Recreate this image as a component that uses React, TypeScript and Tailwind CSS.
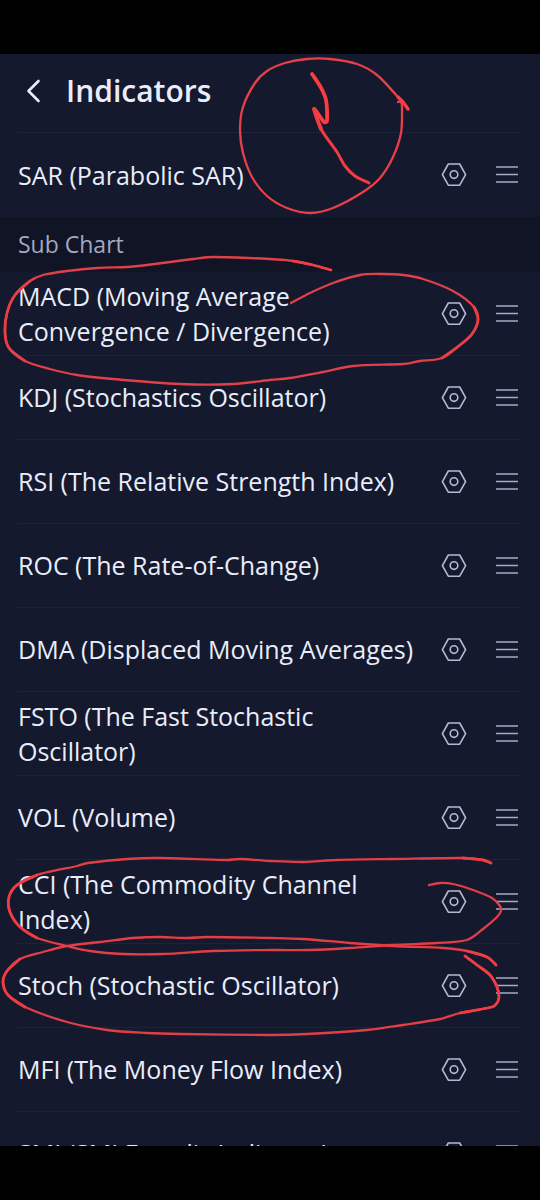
import { useState } from "react";

type Point = [number, number];

type Stroke = {
  width: number;
  color: string;
  points: Point[];
};

const mainIndicators = ["SAR (Parabolic SAR)"];

const subIndicators = [
  "MACD (Moving Average Convergence / Divergence)",
  "KDJ (Stochastics Oscillator)",
  "RSI (The Relative Strength Index)",
  "ROC (The Rate-of-Change)",
  "DMA (Displaced Moving Averages)",
  "FSTO (The Fast Stochastic Oscillator)",
  "VOL (Volume)",
  "CCI (The Commodity Channel Index)",
  "Stoch (Stochastic Oscillator)",
  "MFI (The Money Flow Index)",
  "SMI (SMI Ergodic Indicator)",
];

// Freehand pen marks, in drawing order
const strokes: Stroke[] = [
  {
    width: 2.3,
    color: "#e8404a",
    points: [
      [408, 109], [397, 96], [377, 75], [357, 64], [330, 59], [307, 59], [285, 63], [267, 71], [255, 83],
      [243, 107], [240, 130], [243, 153], [252, 177], [267, 196], [287, 208], [310, 213], [333, 208],
      [363, 192], [380, 178], [393, 157], [401, 133], [402, 107], [401, 102], [398, 102],
    ],
  },
  { width: 3.4, color: "#fb3c41", points: [[408, 109], [403, 102], [398, 97]] },
  {
    width: 3.8,
    color: "#fb3c41",
    points: [[312, 74], [320, 86], [326, 100], [327, 121], [324, 122], [314, 109], [321, 129]],
  },
  {
    width: 3,
    color: "#f03c42",
    points: [[314, 109], [321, 129], [337, 152], [345, 166], [355, 176], [369, 183]],
  },
  {
    width: 2.3,
    color: "#e0404a",
    points: [
      [331, 270], [313, 265], [293, 261], [270, 259], [213, 257], [193, 259], [147, 265], [127, 267], [97, 268],
      [67, 271], [43, 275], [30, 281], [15, 295], [7, 313], [5, 333], [9, 348], [25, 361], [50, 369], [77, 375],
      [113, 379], [180, 384], [233, 384], [270, 380], [290, 378], [323, 372], [353, 366], [403, 364], [420, 361],
      [442, 358], [460, 345], [472, 334], [478, 320], [474, 307], [453, 291], [423, 279], [403, 275], [383, 274],
      [360, 275], [333, 283], [310, 293], [291, 303],
    ],
  },
  { width: 2.8, color: "#f03c42", points: [[331, 270], [313, 265], [293, 261]] },
  { width: 2.8, color: "#e83e45", points: [[30, 281], [15, 295], [7, 313], [5, 333], [9, 348], [25, 361]] },
  { width: 2.8, color: "#e83e45", points: [[442, 358], [460, 345], [472, 334], [478, 320], [474, 307]] },
  {
    width: 2.3,
    color: "#e23e47",
    points: [
      [491, 863], [483, 860], [463, 858], [393, 859], [337, 860], [303, 862], [270, 861], [240, 859], [227, 860],
      [160, 858], [127, 859], [88, 863], [77, 866], [37, 875], [17, 885], [9, 897], [10, 912], [20, 927],
      [37, 938], [67, 946], [90, 951], [123, 954], [163, 954], [213, 951], [270, 950], [310, 950], [350, 948],
      [393, 945], [437, 943], [467, 940], [483, 929], [497, 917], [501, 911], [500, 906], [492, 898], [473, 890],
      [453, 884], [440, 883], [429, 885],
    ],
  },
  { width: 2.8, color: "#f03c42", points: [[491, 863], [483, 860], [463, 858]] },
  { width: 2.8, color: "#f03c42", points: [[37, 875], [17, 885], [9, 897], [10, 912], [20, 927], [37, 938]] },
  {
    width: 2.3,
    color: "#e23e47",
    points: [
      [496, 965], [487, 957], [467, 951], [443, 948], [393, 946], [350, 943], [303, 939], [270, 938], [207, 937],
      [187, 938], [160, 937], [133, 938], [100, 942], [67, 946], [43, 952], [20, 959], [7, 971], [3, 982],
      [8, 995], [25, 1007], [67, 1022], [107, 1030], [147, 1033], [180, 1034], [270, 1035], [307, 1034],
      [367, 1030], [403, 1025], [440, 1019], [460, 1013], [492, 1007], [497, 1003], [499, 997], [497, 987],
      [490, 975], [477, 965], [465, 956],
    ],
  },
  { width: 2.8, color: "#f03c42", points: [[496, 965], [487, 957], [467, 951]] },
  { width: 2.8, color: "#f03c42", points: [[20, 959], [7, 971], [3, 982], [8, 995], [25, 1007]] },
  {
    width: 2.8,
    color: "#f03c42",
    points: [[460, 1013], [492, 1007], [497, 1003], [499, 997], [497, 987], [490, 975], [477, 965], [465, 956]],
  },
];

// Catmull-Rom through the points, written as cubic beziers
function toPath(points: Point[]) {
  let d = `M${points[0][0]} ${points[0][1]}`;
  for (let i = 0; i < points.length - 1; i++) {
    const p0 = points[Math.max(i - 1, 0)];
    const p1 = points[i];
    const p2 = points[i + 1];
    const p3 = points[Math.min(i + 2, points.length - 1)];
    // limit the handles where a long segment meets a short one
    const len = Math.hypot(p2[0] - p1[0], p2[1] - p1[1]);
    const handle = (a: Point, b: Point) => {
      const dist = Math.hypot(b[0] - a[0], b[1] - a[1]) || 1;
      return Math.min(1 / 6, len / 3 / dist);
    };
    const k1 = handle(p0, p2);
    const k2 = handle(p1, p3);
    d += `C${p1[0] + (p2[0] - p0[0]) * k1} ${p1[1] + (p2[1] - p0[1]) * k1}`;
    d += ` ${p2[0] - (p3[0] - p1[0]) * k2} ${p2[1] - (p3[1] - p1[1]) * k2}`;
    d += ` ${p2[0]} ${p2[1]}`;
  }
  return d;
}

function HexIcon() {
  return (
    <svg width="26" height="26" viewBox="0 0 26 26" fill="none" stroke="#b4bad2" strokeWidth="1.6" strokeLinejoin="round">
      <path d="M7.3 2h11.4L24.6 12.6l-5.9 10.6H7.3L1.4 12.6z" />
      <circle cx="13" cy="12.6" r="3.8" />
    </svg>
  );
}

function DragIcon() {
  return (
    <svg width="22" height="18" viewBox="0 0 22 18" fill="none" stroke="#a5abc3" strokeWidth="1.4">
      <path d="M0 1h22M0 8.5h22M0 16h22" />
    </svg>
  );
}

function IndicatorRow({ name, last }: { name: string; last?: boolean }) {
  return (
    <li
      className={
        last
          ? "flex h-[84px] shrink-0 items-center"
          : "flex h-[84px] shrink-0 items-center border-b border-[#1c2338]"
      }
    >
      <span className="flex-1 text-[25px] leading-[35px] text-[#e9edfb]">{name}</span>
      <button type="button" aria-label={`${name} settings`} className="ml-4 shrink-0">
        <HexIcon />
      </button>
      <button type="button" aria-label={`Reorder ${name}`} className="mr-1 ml-[29px] shrink-0 cursor-grab">
        <DragIcon />
      </button>
    </li>
  );
}

export default function App() {
  const [showMarks, setShowMarks] = useState(true);

  return (
    <div className="relative flex h-screen flex-col overflow-hidden bg-black py-[54px] font-['Open_Sans',sans-serif]">
      <main className="flex min-h-0 flex-1 flex-col overflow-hidden bg-[#14192d]">
        <header className="mx-[18px] flex h-[79px] shrink-0 items-center border-b border-[#1c2338] pb-1">
          <button type="button" aria-label="Back" className="ml-2" onClick={() => setShowMarks(!showMarks)}>
            <svg width="16" height="24" viewBox="0 0 16 24" fill="none" stroke="#e9edfb" strokeWidth="2.6" strokeLinecap="round" strokeLinejoin="round">
              <path d="M12.5 2L2.5 12l10 10" />
            </svg>
          </button>
          <h1 className="ml-6 text-[30px] leading-[40px] font-semibold text-[#e9edfb]">Indicators</h1>
        </header>

        <ul className="shrink-0 px-[18px]">
          {mainIndicators.map((name) => (
            <IndicatorRow key={name} name={name} last />
          ))}
        </ul>

        <h2 className="h-[55px] shrink-0 bg-[#101425] px-[18px] text-[23px] leading-[55px] text-[#a3a9c0]">
          Sub Chart
        </h2>

        <ul className="px-[18px]">
          {subIndicators.map((name) => (
            <IndicatorRow key={name} name={name} />
          ))}
        </ul>
      </main>

      {showMarks && (
        <svg
          className="pointer-events-none absolute top-0 left-0"
          width="540"
          height="1200"
          viewBox="0 0 540 1200"
          fill="none"
          strokeLinecap="round"
          strokeLinejoin="round"
          aria-hidden="true"
        >
          {strokes.map((stroke, i) => (
            <path key={i} d={toPath(stroke.points)} stroke={stroke.color} strokeWidth={stroke.width} />
          ))}
        </svg>
      )}
    </div>
  );
}
